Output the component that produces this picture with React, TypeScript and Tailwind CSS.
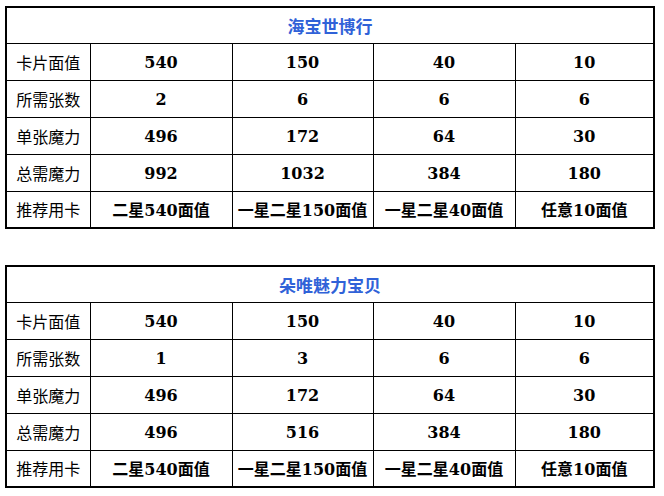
type Table = {
  title: string;
  rows: { label: string; values: string[] }[];
};

const tables: Table[] = [
  {
    title: "海宝世博行",
    rows: [
      { label: "卡片面值", values: ["540", "150", "40", "10"] },
      { label: "所需张数", values: ["2", "6", "6", "6"] },
      { label: "单张魔力", values: ["496", "172", "64", "30"] },
      { label: "总需魔力", values: ["992", "1032", "384", "180"] },
      { label: "推荐用卡", values: ["二星540面值", "一星二星150面值", "一星二星40面值", "任意10面值"] },
    ],
  },
  {
    title: "朵唯魅力宝贝",
    rows: [
      { label: "卡片面值", values: ["540", "150", "40", "10"] },
      { label: "所需张数", values: ["1", "3", "6", "6"] },
      { label: "单张魔力", values: ["496", "172", "64", "30"] },
      { label: "总需魔力", values: ["496", "516", "384", "180"] },
      { label: "推荐用卡", values: ["二星540面值", "一星二星150面值", "一星二星40面值", "任意10面值"] },
    ],
  },
];

const labelFont = "font-['Noto_Sans_CJK_SC',sans-serif]";
const valueFont = "font-['DejaVu_Serif','Noto_Sans_CJK_SC',serif]";

function CardTable({ table }: { table: Table }) {
  return (
    <table className="w-[650px] table-fixed border-collapse border-2 border-black text-[16px] text-black">
      <colgroup>
        <col className="w-[84px]" />
        <col className="w-[142px]" />
        <col className="w-[141px]" />
        <col className="w-[142px]" />
        <col />
      </colgroup>
      <tbody>
        <tr>
          <td
            colSpan={5}
            className={`h-[36px] border border-black p-0 text-center text-[17px] font-bold text-[#3062d8] ${labelFont}`}
          >
            {table.title}
          </td>
        </tr>
        {table.rows.map((row) => (
          <tr key={row.label}>
            <td className={`h-[37px] border border-black p-0 text-center leading-none ${labelFont}`}>
              {row.label}
            </td>
            {row.values.map((v, i) => (
              <td
                key={i}
                className={`h-[37px] whitespace-nowrap border border-black p-0 pt-[3px] text-center font-bold leading-none ${valueFont}`}
              >
                {v}
              </td>
            ))}
          </tr>
        ))}
      </tbody>
    </table>
  );
}

export default function App() {
  return (
    <div className="h-[496px] w-[664px] bg-white pl-[5px] pt-[6px]">
      <div className="flex flex-col gap-[36px]">
        {tables.map((t) => (
          <CardTable key={t.title} table={t} />
        ))}
      </div>
    </div>
  );
}
